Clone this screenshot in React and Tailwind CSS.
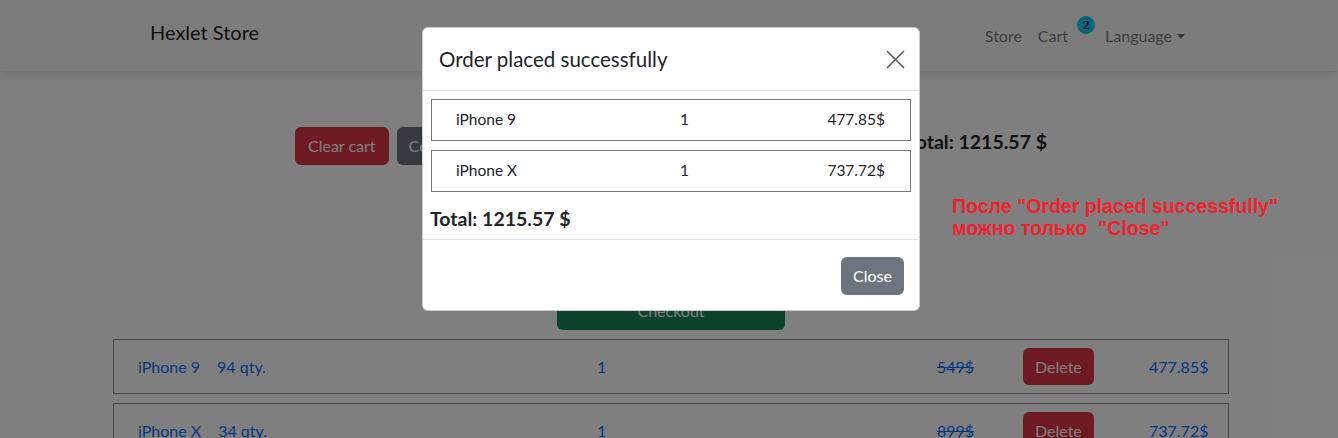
const cartItems = [
  { id: 1, name: "iPhone 9", stock: 94, qty: 1, oldPrice: "549$", price: "477.85$" },
  { id: 2, name: "iPhone X", stock: 34, qty: 1, oldPrice: "899$", price: "737.72$" },
];

function Navbar() {
  return (
    <nav className="h-[71px] bg-[#f8f9fa] shadow-[0_4px_8px_rgba(0,0,0,0.12)] flex items-center justify-between pl-[150px] pr-[153px] relative z-10">
      <a className="text-[20px] text-black/90 -mt-[7px]">Hexlet Store</a>
      <div className="flex items-center gap-4 text-[16px] text-black/55">
        <a>Store</a>
        <a className="relative pr-[21px]">
          Cart
          <span className="absolute left-[39px] -top-[8px] w-[18px] h-[18px] rounded-full bg-[#0dcaf0] text-black text-[12px] leading-[18px] text-center">
            2
          </span>
        </a>
        <a className="flex items-center gap-[5px]">
          Language
          <span className="w-0 h-0 border-l-[4px] border-r-[4px] border-t-[5px] border-l-transparent border-r-transparent border-t-black/55 mt-[2px]"></span>
        </a>
      </div>
    </nav>
  );
}

function CartRow({ item }) {
  return (
    <div className="h-[55px] border border-[#8c8c8c] grid grid-cols-[459px_340px_86px_126px_1fr] items-center pl-[24px] pr-[24px] text-[#0d6efd]">
      <div className="flex gap-[17px]">
        <span>{item.name}</span>
        <span>{item.stock} qty.</span>
      </div>
      <span>{item.qty}</span>
      <span className="line-through">{item.oldPrice}</span>
      <div>
        <button className="h-[37px] px-[12px] rounded-md bg-[#dc3545] text-white">Delete</button>
      </div>
      <span className="text-right">{item.price}</span>
    </div>
  );
}

function OrderModal() {
  return (
    <div className="absolute left-[422px] top-[27px] w-[498px] bg-white rounded-md border border-black/20 z-30">
      <div className="h-[63px] border-b border-[#dee2e6] flex items-center justify-between pl-[16px] pr-[14px]">
        <h5 className="text-[20.5px] text-[#212529]">Order placed successfully</h5>
        <svg width="19" height="19" viewBox="0 0 19 19" className="text-[#5a5a5a]">
          <path d="M1 1L18 18M18 1L1 18" stroke="currentColor" strokeWidth="1.6" fill="none" />
        </svg>
      </div>
      <div className="px-[8px] pt-[8px] pb-[7px] flex flex-col">
        {cartItems.map((item) => (
          <div
            key={item.id}
            className="h-[42px] mb-[9px] border border-[#7a7a7a] grid grid-cols-[224px_1fr_auto] items-center pl-[24px] pr-[25px] text-[#212529] text-[15.5px]"
          >
            <span>{item.name}</span>
            <span>{item.qty}</span>
            <span>{item.price}</span>
          </div>
        ))}
        <div className="text-[19.5px] font-bold text-[#212529] leading-[27px] mt-[4px] -ml-[1px]">Total: 1215.57 $</div>
      </div>
      <div className="border-t border-[#dee2e6] flex justify-end px-[15px] pt-[17px] pb-[15px]">
        <button className="h-[38px] px-[12px] rounded-md bg-[#6c757d] text-white text-[16px]">Close</button>
      </div>
    </div>
  );
}

export default function App() {
  return (
    <div
      className="relative w-[1338px] h-[438px] overflow-hidden bg-white text-[16px] text-[#212529]"
      style={{ fontFamily: "Lato, 'Noto Sans', sans-serif" }}
    >
      <Navbar />
      <main className="flex flex-col items-center">
        <div className="w-[752px] ml-[4px] mt-[56px] flex items-center justify-between">
          <div className="flex gap-[8px]">
            <button className="h-[38px] px-[13px] rounded-md bg-[#dc3545] text-white">Clear cart</button>
            <button className="h-[38px] px-[12px] rounded-md bg-[#6c757d] text-white">Continue shopping</button>
          </div>
          <div className="text-[19.5px] font-bold -mt-[8px]">Total: 1215.57 $</div>
        </div>
        <button className="mt-[127px] w-[228px] h-[38px] ml-[4px] rounded-md bg-[#198754] text-white">Checkout</button>
        <div className="w-[1116px] ml-[4px] mt-[9px] flex flex-col gap-[9px]">
          {cartItems.map((item) => (
            <CartRow key={item.id} item={item} />
          ))}
        </div>
      </main>

      <div className="absolute inset-0 bg-black/50 z-20"></div>
      <OrderModal />

      <div
        className="absolute left-[952px] top-[195px] z-40 text-[19.5px] font-bold leading-[22px] text-[#f2202d] whitespace-pre"
        style={{ fontFamily: "'Liberation Sans', Arial, sans-serif" }}
      >
        {'После "Order placed successfully"\nможно только  "Close"'}
      </div>
    </div>
  );
}
